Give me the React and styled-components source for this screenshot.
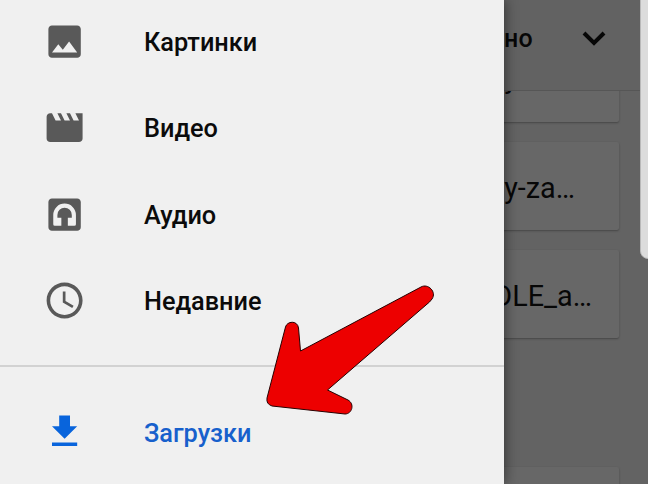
import React from "react";
import styled, { createGlobalStyle } from "styled-components";

const GlobalStyle = createGlobalStyle`
  * { box-sizing: border-box; }
  body { margin: 0; overflow: hidden; }
`;

const Screen = styled.main`
  position: relative;
  width: 648px;
  height: 484px;
  overflow: hidden;
  background: #636363;
  font-family: Roboto, "Noto Sans", sans-serif;
  color: #070707;
`;

const Page = styled.section`
  display: flex;
  flex-direction: column;
  height: 580px;
`;

const Header = styled.header`
  position: relative;
  z-index: 1;
  flex: none;
  display: flex;
  align-items: center;
  justify-content: flex-end;
  gap: 48px;
  height: 91px;
  padding: 0 41px 13px 0;
  background: #626262;
  border-bottom: 1px solid #565656;
  font-size: 25px;
  font-weight: 500;
  letter-spacing: 0.3px;
`;

const Files = styled.div`
  display: flex;
  flex-direction: column;
  gap: 20px;
  width: 619px;
  margin-top: -57px;
`;

const FileCard = styled.article`
  flex: none;
  display: flex;
  align-items: center;
  justify-content: flex-end;
  height: 88px;
  margin-top: ${(p) => p.$offset || 0}px;
  padding: 3px ${(p) => p.$inset || 0}px ${(p) => p.$lift || 0}px 0;
  background: #676767;
  border-radius: 2px;
  box-shadow: 0 1px 2px #464646;
  font-size: 28.8px;
  white-space: nowrap;
`;

const Drawer = styled.nav`
  position: absolute;
  z-index: 2;
  top: 0;
  left: 0;
  display: flex;
  flex-direction: column;
  width: 504px;
  height: 484px;
  background: #f0f0f0;
  box-shadow: 1px 0 12px rgba(0, 0, 0, 0.48);
`;

const Group = styled.div`
  display: flex;
  flex-direction: column;
  flex: none;
  padding-bottom: 21px;
  border-bottom: 2px solid #d2d2d2;
`;

const Entry = styled.a`
  display: flex;
  align-items: center;
  flex: none;
  gap: 57.5px;
  height: ${(p) => p.$height || 86.4}px;
  padding-left: 43.3px;
  color: ${(p) => (p.$active ? "#1760cc" : "#0b0b0b")};
  font-size: 25.3px;
  font-weight: 500;

  svg {
    flex: none;
    color: ${(p) => (p.$active ? "#0864dc" : "#595959")};
  }
`;

const Label = styled.span`
  position: relative;
  top: 1.3px;
`;

const ScrollHandle = styled.div`
  position: absolute;
  z-index: 3;
  top: -8px;
  right: -8px;
  width: 16px;
  height: 267px;
  background: #dcdcdc;
  border: 1px solid #b9b9b9;
  border-radius: 9px;
`;

const Pointer = styled.svg`
  position: absolute;
  z-index: 4;
  top: 270px;
  left: 250px;
`;

const paths = {
  image:
    "M21 19V5c0-1.1-.9-2-2-2H5c-1.1 0-2 .9-2 2v14c0 1.1.9 2 2 2h14c1.1 0 2-.9 2-2zM8.5 13.5l2.5 3.01L14.5 12l4.5 6H5l3.5-4.5z",
  video:
    "M18 4l2 4h-3l-2-4h-2l2 4h-3l-2-4H8l2 4H7L5 4H4c-1.1 0-1.99.9-1.99 2L2 18c0 1.1.9 2 2 2h16c1.1 0 2-.9 2-2V4h-4z",
  audio:
    "M19 3H5c-1.1 0-2 .9-2 2v14c0 1.1.9 2 2 2h14c1.1 0 2-.9 2-2V5c0-1.1-.9-2-2-2zM5.7 12.2a6.3 6.3 0 0 1 12.6 0v5.1q0 .9-.9.9h-3.6v-4.5h2.2v-1.5a4 4 0 0 0-8 0v1.5h2.2v4.5H6.6q-.9 0-.9-.9z",
  recent:
    "M11.99 2C6.47 2 2 6.48 2 12s4.47 10 9.99 10C17.52 22 22 17.52 22 12S17.52 2 11.99 2zM12 20c-4.42 0-8-3.58-8-8s3.58-8 8-8 8 3.58 8 8-3.58 8-8 8zm.5-13H11v6l5.25 3.15.75-1.23-4.5-2.67z",
  download: "M19 9h-4V3H9v6H5l7 7 7-7zM5 18v2h14v-2H5z",
};

const Icon = ({ name }) => (
  <svg width="43.2" height="43.2" viewBox="0 0 24 24" aria-hidden="true">
    <path d={paths[name]} fill="currentColor" fillRule="evenodd" />
  </svg>
);

const entries = [
  { icon: "image", label: "Картинки", height: 83.4 },
  { icon: "video", label: "Видео", height: 87.6 },
  { icon: "audio", label: "Аудио" },
  { icon: "recent", label: "Недавние" },
];

export default function App() {
  return (
    <>
      <GlobalStyle />
      <Screen>
        <Page>
          <Header>
            <span>но</span>
            <svg width="26" height="18" viewBox="0 0 26 18" aria-hidden="true">
              <path d="M3 3l10 10L23 3" fill="none" stroke="currentColor" strokeWidth="4" />
            </svg>
          </Header>
          <Files>
            <FileCard $inset={101} $lift={3}>y</FileCard>
            <FileCard $inset={44}>y-za…</FileCard>
            <FileCard $inset={27}>DLE_a…</FileCard>
            <FileCard $offset={109} />
          </Files>
        </Page>
        <Drawer>
          <Group>
            {entries.map(({ icon, label, height }) => (
              <Entry key={icon} $height={height}>
                <Icon name={icon} />
                <Label>{label}</Label>
              </Entry>
            ))}
          </Group>
          <Entry $active $height={130}>
            <Icon name="download" />
            <Label>Загрузки</Label>
          </Entry>
        </Drawer>
        <ScrollHandle />
        <Pointer width="200" height="160" viewBox="0 0 200 160" aria-hidden="true">
          <path
            d="M35.5 57C37 51 47.5 50 48.5 58L50.5 81L171 17C178 13 187 22 182 29Q180 32 176 35L77.5 120L98 130C105 134 102 144 95 144L22 136Q16 134 17 128Z"
            fill="#ed0000"
            stroke="#260000"
            strokeWidth="1"
            strokeLinejoin="round"
          />
        </Pointer>
      </Screen>
    </>
  );
}
